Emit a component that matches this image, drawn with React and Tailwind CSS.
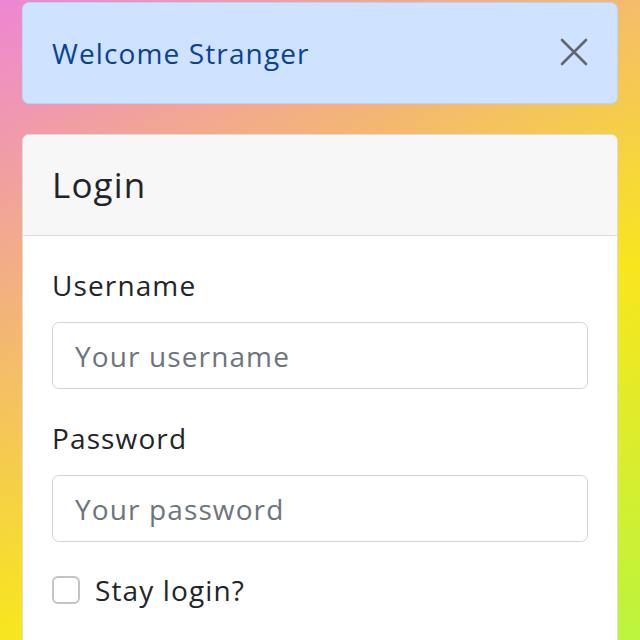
import React from "react";

export default function App() {
  return (
    <div
      className="min-h-[640px] w-full px-[22px] pt-[2px] tracking-[0.07em] bg-[linear-gradient(150deg,#ee86d4_0%,#f3b27c_30%,#f8e61e_62%,#b8f53e_100%)]"
      style={{ fontFamily: '"Open Sans", "Noto Sans", sans-serif' }}
    >
      <div className="flex h-[102px] items-center justify-between rounded-[7px] border border-[#b6d4fe] bg-[#cfe2ff] pl-[29px] pr-[29px]">
        <span className="text-[28px] text-[#084298]">Welcome Stranger</span>
        <svg width="28" height="28" viewBox="0 0 28 28" className="mt-[-2px]">
          <path d="M2 2 L26 26 M26 2 L2 26" stroke="#63676d" strokeWidth="2.6" strokeLinecap="round" />
        </svg>
      </div>

      <div className="mt-[30px] overflow-hidden rounded-[7px] border border-[#dcdcdc] bg-white">
        <div className="flex h-[101px] items-center border-b border-[#dcdcdc] bg-[#f7f7f7] px-[29px]">
          <span className="text-[35px] text-[#212529]">Login</span>
        </div>
        <div className="px-[29px] pt-[28px] pb-[40px]">
          <label className="block text-[28px] leading-[42px] text-[#212529]">Username</label>
          <div className="mt-[16px] flex h-[67px] items-center rounded-[7px] border border-[#ced4da] px-[22px]">
            <span className="text-[28px] text-[#6c757d]">Your username</span>
          </div>
          <label className="mt-[28px] block text-[28px] leading-[42px] text-[#212529]">Password</label>
          <div className="mt-[16px] flex h-[67px] items-center rounded-[7px] border border-[#ced4da] px-[22px]">
            <span className="text-[28px] text-[#6c757d]">Your password</span>
          </div>
          <div className="mt-[27px] flex h-[42px] items-center gap-[15px]">
            <span className="block h-[28px] w-[28px] rounded-[6px] border-2 border-[#c4c4c4] bg-white"></span>
            <span className="text-[28px] text-[#212529]">Stay login?</span>
          </div>
        </div>
      </div>
    </div>
  );
}
